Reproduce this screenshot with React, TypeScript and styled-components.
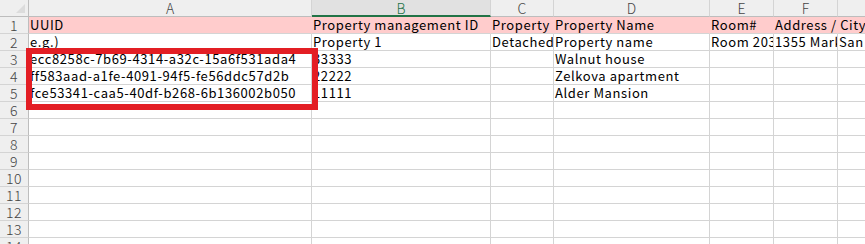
import { Fragment } from "react";
import styled, { createGlobalStyle } from "styled-components";

const GlobalStyle = createGlobalStyle`
  body {
    margin: 0;
    background: #ffffff;
    font-family: "Noto Sans CJK JP", "Noto Sans", sans-serif;
  }
`;

const columns = [
  { name: "", width: 29 },
  { name: "A", width: 283 },
  { name: "B", width: 179, selected: true },
  { name: "C", width: 63 },
  { name: "D", width: 156 },
  { name: "E", width: 64 },
  { name: "F", width: 64 },
  { name: "", width: 60 },
];

const rows: string[][] = [
  ["UUID", "Property management ID", "Property type", "Property Name", "Room#", "Address / City", ""],
  ["e.g.)", "Property 1", "Detached", "Property name", "Room 203", "1355 Market", "San Francisco"],
  ["ecc8258c-7b69-4314-a32c-15a6f531ada4", "33333", "", "Walnut house", "", "", ""],
  ["ff583aad-a1fe-4091-94f5-fe56ddc57d2b", "22222", "", "Zelkova apartment", "", "", ""],
  ["fce53341-caa5-40df-b268-6b136002b050", "11111", "", "Alder Mansion", "", "", ""],
];

const Sheet = styled.div`
  position: relative;
  width: 865px;
  height: 244px;
  overflow: hidden;
`;

const Grid = styled.div`
  display: grid;
  grid-template-columns: ${columns.map((c) => `${c.width}px`).join(" ")};
  grid-auto-rows: 17px;
`;

const ColHeader = styled.div<{ $selected?: boolean }>`
  box-sizing: border-box;
  background: ${(p) => (p.$selected ? "#e1e1e1" : "#efefef")};
  border-right: 1px solid #d4d4d4;
  border-bottom: ${(p) => (p.$selected ? "2px solid #217346" : "1px solid #bdbdbd")};
  color: ${(p) => (p.$selected ? "#217346" : "#444444")};
  font-size: 14px;
  font-weight: 300;
  line-height: 16px;
  text-align: center;
`;

const Corner = styled.div`
  box-sizing: border-box;
  background: #efefef;
  border-right: 1px solid #bdbdbd;
  border-bottom: 1px solid #bdbdbd;
  position: relative;
  &::after {
    content: "";
    position: absolute;
    right: 3px;
    bottom: 3px;
    border-left: 9px solid transparent;
    border-bottom: 9px solid #dcdcdc;
  }
`;

const RowHeader = styled.div`
  box-sizing: border-box;
  background: #efefef;
  border-right: 1px solid #bdbdbd;
  border-bottom: 1px solid #d4d4d4;
  color: #444444;
  font-size: 14px;
  font-weight: 300;
  letter-spacing: 0.5px;
  line-height: 17px;
  text-align: center;
`;

const Cell = styled.div<{ $pink?: boolean; $spill?: boolean }>`
  box-sizing: border-box;
  position: relative;
  z-index: ${(p) => (p.$spill ? 1 : 0)};
  background: ${(p) => (p.$pink ? "#ffcccc" : "#ffffff")};
  border-right: 1px solid ${(p) => (p.$pink ? "#ffcccc" : "#d4d4d4")};
  border-bottom: 1px solid #d4d4d4;
  color: #000000;
  font-size: 13px;
  letter-spacing: 0.6px;
  line-height: 16px;
  padding-left: 1px;
  white-space: nowrap;
  overflow: ${(p) => (p.$spill ? "visible" : "hidden")};
`;

const Highlight = styled.div`
  position: absolute;
  z-index: 2;
  left: 26px;
  top: 48px;
  width: 292px;
  height: 62px;
  box-sizing: border-box;
  border: 6px solid #e31e24;
  pointer-events: none;
`;

export default function App() {
  const dataCols = columns.length - 1;
  return (
    <Sheet>
      <GlobalStyle />
      <Grid>
        {columns.map((c, i) =>
          i === 0 ? (
            <Corner key="corner" />
          ) : (
            <ColHeader key={i} $selected={c.selected}>
              {c.name}
            </ColHeader>
          )
        )}
        {Array.from({ length: 14 }).map((_, r) => (
          <Fragment key={r}>
            <RowHeader>{r + 1}</RowHeader>
            {Array.from({ length: dataCols }).map((__, c) => {
              const text = rows[r]?.[c] ?? "";
              const next = rows[r]?.[c + 1] ?? "";
              return (
                <Cell key={c} $pink={r === 0} $spill={text !== "" && next === "" && c === 5}>
                  {text}
                </Cell>
              );
            })}
          </Fragment>
        ))}
      </Grid>
      <Highlight />
    </Sheet>
  );
}
